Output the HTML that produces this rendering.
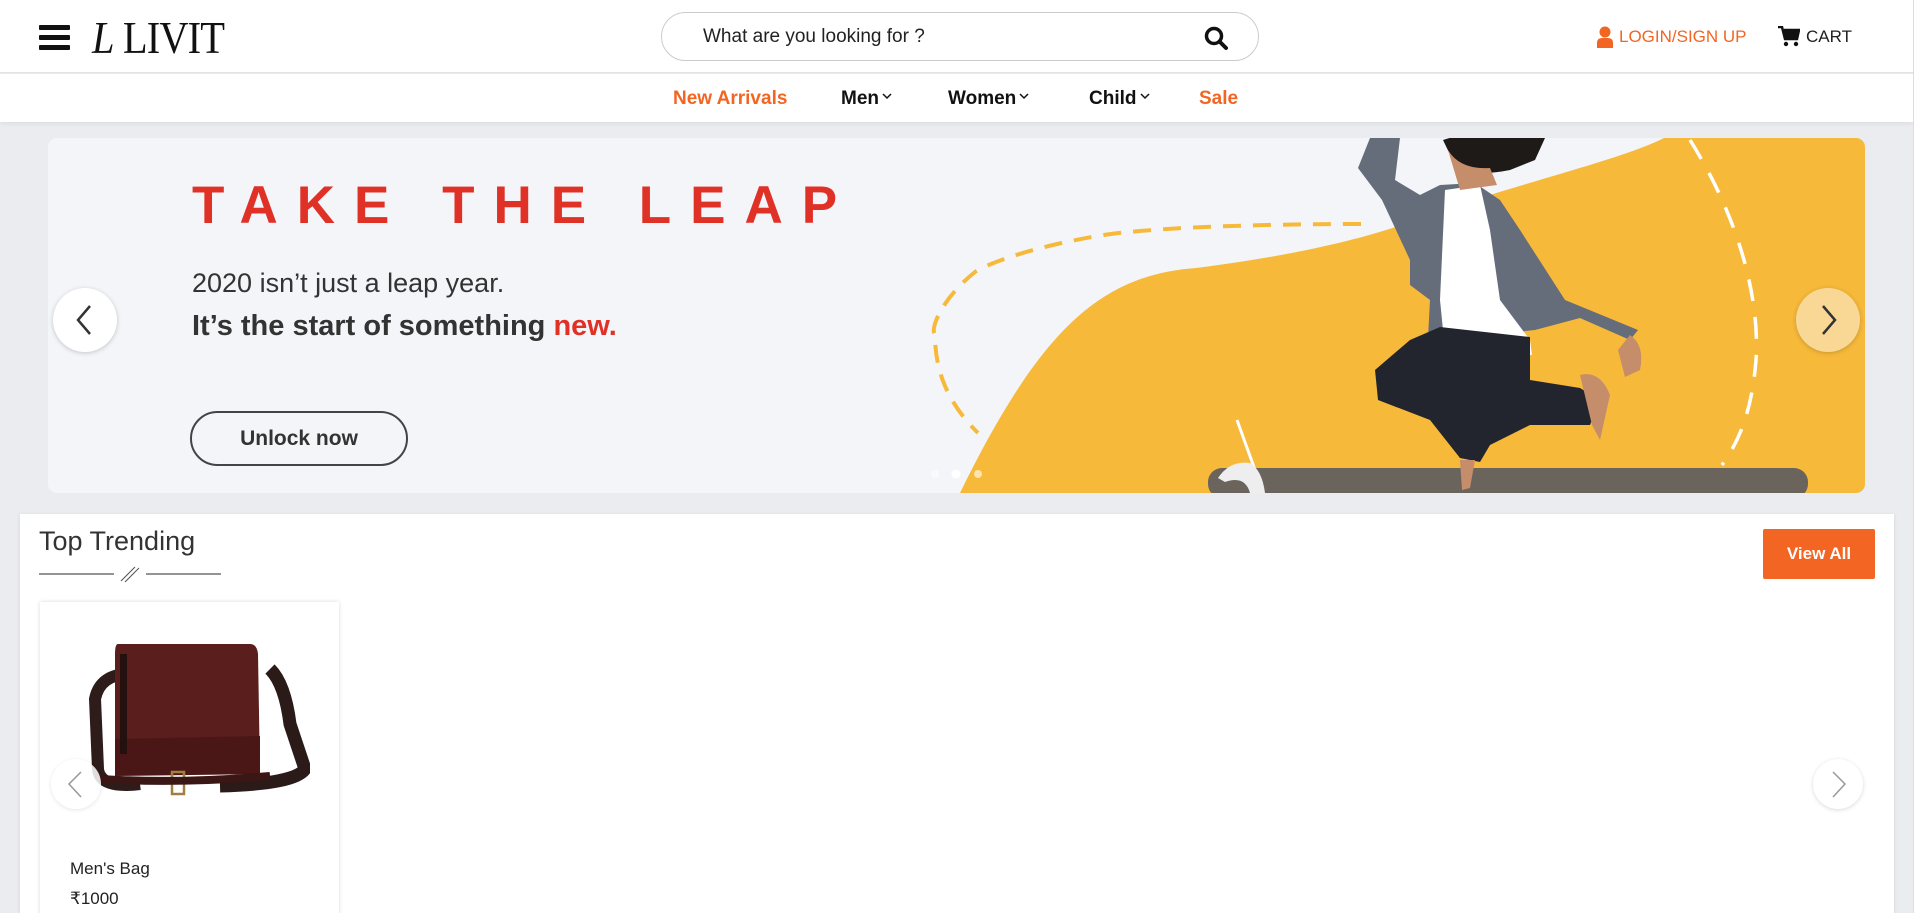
<!DOCTYPE html>
<html style="overflow:hidden;height:913px"><head><meta charset="utf-8">
<style>
*{box-sizing:border-box;margin:0;padding:0}
body{width:1920px;height:913px;overflow:hidden;background:#eaecef;font-family:"Liberation Sans",sans-serif;position:relative}
.hdr{position:absolute;left:0;top:0;width:1913px;height:73px;background:#fff;border-bottom:1px solid #e2e2e2}
.nav{position:absolute;left:0;top:74px;width:1913px;height:48px;background:#fff;box-shadow:0 2px 4px rgba(0,0,0,.06)}
.sb{position:absolute;right:0;top:0;width:7px;height:913px;background:#fff;border-left:1px solid #ddd}
.nav span{position:absolute;top:14px;font-size:19px;font-weight:bold;color:#111}
.nav svg{vertical-align:4px;margin-left:3px}
.or{color:#f26522!important}
.search{position:absolute;left:661px;top:12px;width:598px;height:49px;border:1px solid #ccc;border-radius:25px}
.banner{position:absolute;left:48px;top:138px;width:1817px;height:355px;border-radius:9px;overflow:hidden;background:#f3f5f9}
.arr{position:absolute;border-radius:50%;width:64px;height:64px;box-shadow:0 1px 5px rgba(0,0,0,.2)}
.card{position:absolute;left:20px;top:514px;width:1874px;height:399px;background:#fff;box-shadow:0 1px 4px rgba(0,0,0,.1);overflow:hidden}
</style></head><body>
<div class="hdr">
 <div style="position:absolute;left:39px;top:25px;width:31px;height:5px;background:#111;border-radius:1px"></div>
 <div style="position:absolute;left:39px;top:35px;width:31px;height:5px;background:#111;border-radius:1px"></div>
 <div style="position:absolute;left:39px;top:45px;width:31px;height:5px;background:#111;border-radius:1px"></div>
 <div style="position:absolute;left:92px;top:11px;font-family:'Liberation Serif',serif;font-size:46px;color:#111;letter-spacing:-1px;transform:scaleX(.88);transform-origin:left"><span style="font-style:italic">L</span> LIVIT</div>
 <div class="search"><span style="position:absolute;left:41px;top:13px;font-size:19px;color:#222">What are you looking for ?</span>
  <svg style="position:absolute;left:541px;top:12px" width="26" height="26" viewBox="0 0 26 26"><circle cx="11" cy="11" r="7.5" fill="none" stroke="#111" stroke-width="3.5"/><line x1="16.5" y1="16.5" x2="23" y2="23" stroke="#111" stroke-width="4" stroke-linecap="round"/></svg></div>
 <svg style="position:absolute;left:1596px;top:26px" width="18" height="22" viewBox="0 0 18 22"><circle cx="9" cy="6" r="5.5" fill="#f26522"/><path d="M1 22 V17 Q1 12 6 12 H12 Q17 12 17 17 V22Z" fill="#f26522"/></svg>
 <span style="position:absolute;left:1619px;top:27px;font-size:17px;color:#f26522">LOGIN/SIGN UP</span>
 <svg style="position:absolute;left:1778px;top:26px" width="22" height="21" viewBox="0 0 22 21"><path d="M0 1 H4 L7 13 H19 L21 4 H6" fill="none" stroke="#111" stroke-width="2.5"/><path d="M5 4 H21 L19 12 H7Z" fill="#111"/><circle cx="8" cy="18" r="2.2" fill="#111"/><circle cx="18" cy="18" r="2.2" fill="#111"/></svg>
 <span style="position:absolute;left:1806px;top:27px;font-size:17px;color:#222">CART</span>
</div>
<div class="nav">
 <span class="or" style="left:673px">New Arrivals</span>
 <span style="left:841px">Men<svg width="10" height="7"><path d="M1 1 L5 5 L9 1" fill="none" stroke="#111" stroke-width="1.5"/></svg></span>
 <span style="left:948px">Women<svg width="10" height="7"><path d="M1 1 L5 5 L9 1" fill="none" stroke="#111" stroke-width="1.5"/></svg></span>
 <span style="left:1089px">Child<svg width="10" height="7"><path d="M1 1 L5 5 L9 1" fill="none" stroke="#111" stroke-width="1.5"/></svg></span>
 <span class="or" style="left:1199px">Sale</span>
</div>
<div class="sb"></div>
<div class="banner">
 <svg width="1817" height="355" viewBox="48 138 1817 355" style="position:absolute;left:0;top:0">
  <path d="M960 493 C1040 330 1100 275 1196 268 C1300 255 1380 235 1422 217 C1530 180 1620 160 1664 138 L1865 138 L1865 493Z" fill="#f7b93a"/>
  <path d="M1361 224 C1250 224 1150 228 1104 235 C1040 245 990 262 975 272 C940 300 930 330 935 335 C935 380 955 410 978 433" fill="none" stroke="#f7b93a" stroke-width="4" stroke-dasharray="18 12"/>
  <path d="M1690 140 C1740 220 1760 300 1756 360 C1752 410 1740 440 1722 465" fill="none" stroke="#fff" stroke-width="3.5" stroke-dasharray="22 16"/>
  <path d="M1237 420 L1255 470" stroke="#fff" stroke-width="3" fill="none"/>
  <rect x="1208" y="468" width="600" height="30" rx="14" fill="#6b645d"/>
  <path d="M1218 478 Q1230 460 1250 463 Q1262 470 1265 493 H1250 Q1245 475 1225 482Z" fill="#eee"/>
  <path d="M1358 168 L1370 138 L1400 138 L1395 180 L1420 195 L1440 185 L1475 183 L1500 200 L1520 230 L1565 300 L1638 330 L1630 340 L1580 318 L1535 330 L1470 337 L1428 338 L1430 300 L1410 285 L1410 260 L1382 200Z" fill="#656c7a"/>
  <path d="M1445 190 L1480 185 L1490 230 L1500 300 L1530 340 L1532 355 L1445 350 L1440 300Z" fill="#fff"/>
  <path d="M1443 140 Q1470 130 1545 138 L1535 160 L1510 170 Q1470 178 1455 165Z" fill="#1e1a18"/>
  <path d="M1448 150 Q1460 170 1490 168 L1497 185 L1460 190Z" fill="#c58d6a"/>
  <path d="M1440 327 L1530 337 L1530 380 L1580 388 L1600 400 L1590 425 L1530 425 L1490 445 L1480 462 L1460 458 L1430 420 L1378 400 L1375 370 L1410 340Z" fill="#23252e"/>
  <path d="M1580 375 Q1600 370 1610 395 L1600 440 L1592 425Z" fill="#c58d6a"/>
  <path d="M1630 335 Q1645 345 1640 370 L1625 377 L1618 350Z" fill="#c58d6a"/>
  <path d="M1460 460 L1475 460 L1470 488 L1462 490Z" fill="#c58d6a"/>
  <circle cx="935" cy="474" r="4" fill="#fff" opacity=".5"/><circle cx="956" cy="474" r="4.5" fill="#fff"/><circle cx="978" cy="474" r="4" fill="#fff" opacity=".6"/>
 </svg>
 <div style="position:absolute;left:144px;top:37px;font-size:53px;font-weight:bold;color:#e03127;letter-spacing:19px">TAKE THE LEAP</div>
 <div style="position:absolute;left:144px;top:130px;font-size:27px;color:#333">2020 isn’t just a leap year.</div>
 <div style="position:absolute;left:144px;top:172px;font-size:29px;font-weight:bold;color:#333">It’s the start of something <span style="color:#e03127">new.</span></div>
 <div style="position:absolute;left:142px;top:273px;width:218px;height:55px;border:2px solid #444;border-radius:28px;text-align:center;line-height:51px;font-size:21px;font-weight:bold;color:#333">Unlock now</div>
</div>
<div class="arr" style="left:53px;top:288px;background:#fff"><svg width="64" height="64"><path d="M37 18 L25 32 L37 46" fill="none" stroke="#333" stroke-width="2.5"/></svg></div>
<div class="arr" style="left:1796px;top:288px;background:#f9d896"><svg width="64" height="64"><path d="M27 18 L39 32 L27 46" fill="none" stroke="#333" stroke-width="2.5"/></svg></div>
<div class="card">
 <div style="position:absolute;left:19px;top:12px;font-size:27px;color:#333">Top Trending</div>
 <svg style="position:absolute;left:19px;top:50px" width="184" height="20"><line x1="0" y1="10" x2="75" y2="10" stroke="#555" stroke-width="1.2"/><line x1="107" y1="10" x2="182" y2="10" stroke="#555" stroke-width="1.2"/><line x1="82" y1="17" x2="96" y2="3" stroke="#555"/><line x1="86" y1="18" x2="100" y2="4" stroke="#555"/></svg>
 <div style="position:absolute;left:1743px;top:15px;width:112px;height:50px;background:#f26522;border-radius:2px;color:#fff;font-size:17px;font-weight:bold;text-align:center;line-height:50px">View All</div>
 <div style="position:absolute;left:20px;top:88px;width:299px;height:320px;background:#fff;box-shadow:0 0 4px rgba(0,0,0,.15)">
  <svg style="position:absolute;left:30px;top:22px" width="240" height="210" viewBox="0 0 240 210">
   <path d="M60 50 Q30 50 25 75 L28 145 Q30 165 70 160" fill="none" stroke="#2e1c1a" stroke-width="12"/>
   <path d="M200 45 Q215 60 220 100 L235 145 Q225 160 150 162" fill="none" stroke="#2a1a18" stroke-width="13"/>
   <path d="M48 20 L180 20 Q187 20 188 30 L190 148 L45 150 L45 30 Q45 20 48 20Z" fill="#5a1e1c"/>
   <path d="M45 115 L190 112 L190 150 L45 152Z" fill="#4a1716"/>
   <rect x="50" y="30" width="7" height="100" fill="#251010"/>
   <rect x="102" y="148" width="12" height="22" fill="none" stroke="#a08040" stroke-width="2.5"/>
   <path d="M30 155 Q110 160 200 152" fill="none" stroke="#3a1614" stroke-width="8"/>
  </svg>
  <div style="position:absolute;left:30px;top:257px;font-size:17px;color:#222">Men's Bag</div>
  <div style="position:absolute;left:30px;top:287px;font-size:17px;color:#222">₹1000</div>
 </div>
 <div style="position:absolute;left:31px;top:245px;width:50px;height:50px;border-radius:50%;background:rgba(255,255,255,.85);box-shadow:0 1px 4px rgba(0,0,0,.1)"><svg width="50" height="50"><path d="M30 13 L18 25 L30 38" fill="none" stroke="#999" stroke-width="1.5"/></svg></div>
 <div style="position:absolute;left:1793px;top:245px;width:50px;height:50px;border-radius:50%;background:#fff;box-shadow:0 1px 4px rgba(0,0,0,.15)"><svg width="50" height="50"><path d="M20 13 L32 25 L20 38" fill="none" stroke="#999" stroke-width="1.5"/></svg></div>
</div>
</body></html>
